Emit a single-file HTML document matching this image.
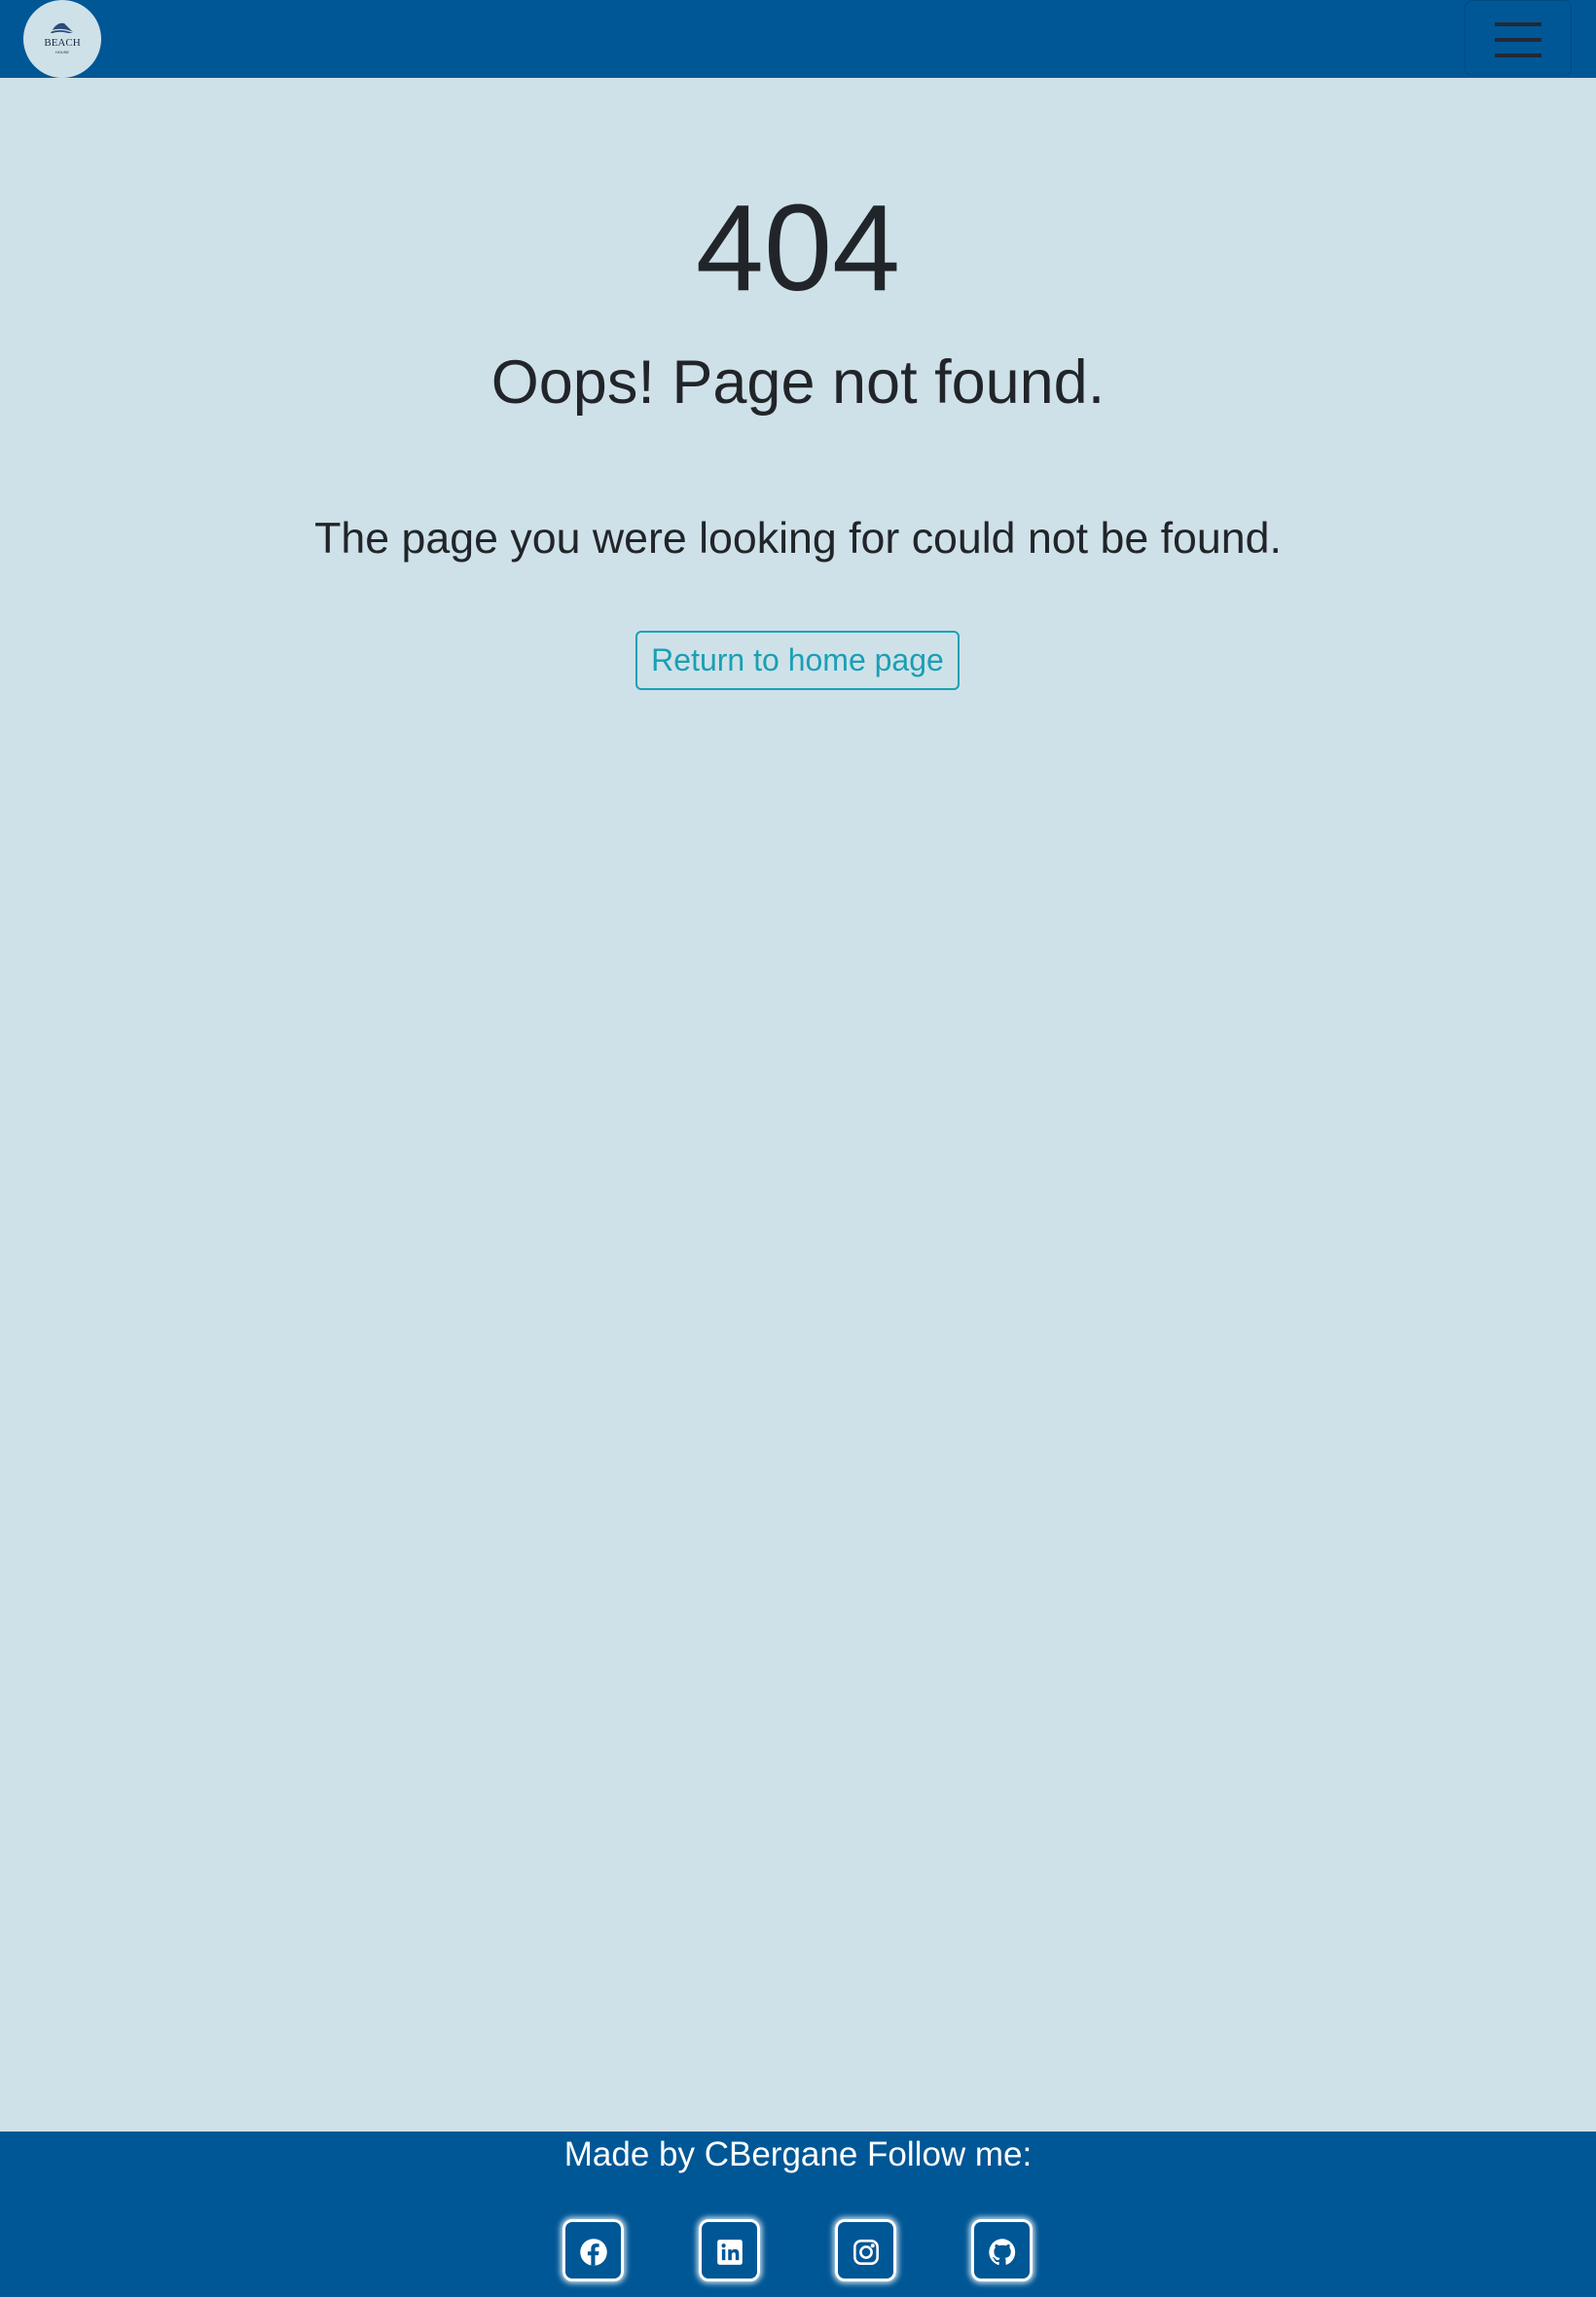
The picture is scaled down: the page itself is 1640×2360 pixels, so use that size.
<!DOCTYPE html>
<html><head><meta charset="utf-8"><style>
*{margin:0;padding:0;box-sizing:border-box}
html,body{width:1640px;height:2360px;overflow:hidden}
body{background:#cfe1e8;font-family:"Liberation Sans",sans-serif;color:#212529;position:relative}
nav{position:absolute;left:0;top:0;width:1640px;height:80px;background:#005796}
.logo{position:absolute;left:24px;top:0;width:80px;height:80px;border-radius:50%;background:#cfe1e8;text-align:center}
.logo .t{position:absolute;top:38px;left:0;width:80px;font-family:"Liberation Serif",serif;font-size:11px;color:#1d2a44}
.logo .h{position:absolute;top:51px;left:0;width:80px;font-size:4px;color:#1d2a44}
.burger{position:absolute;left:1505px;top:0;width:110px;height:78px;border:1.5px solid rgba(0,0,0,.15);border-radius:8px}
.burger i{position:absolute;left:30px;width:48px;height:4px;background:#212a37}
h1{position:absolute;top:180px;left:0;width:1640px;text-align:center;font-size:126px;font-weight:normal;line-height:150px}
h2{position:absolute;top:355px;left:0;width:1640px;text-align:center;font-size:63px;font-weight:normal;line-height:76px}
p.m{position:absolute;top:527px;left:0;width:1640px;text-align:center;font-size:44.7px;line-height:54px;white-space:nowrap}
.btn{position:absolute;left:653px;top:648px;width:333px;height:61px;border:2px solid #17a2b8;border-radius:6px;color:#1a9fb5;font-size:32px;line-height:57px;text-align:center;white-space:nowrap}
footer{position:absolute;left:0;top:2190px;width:1640px;height:170px;background:#005796;color:#fff}
footer .tx{position:absolute;top:2px;width:1640px;text-align:center;font-size:35px;line-height:44px}
.ic{position:absolute;top:90px;width:63px;height:64px;border:3px solid #fff;border-radius:10px;box-shadow:0 0 6px 2px rgba(255,255,255,.8);display:flex;align-items:center;justify-content:center;padding-top:4px}
</style></head><body>
<nav>
<div class="logo">
<svg style="position:absolute;left:26px;top:20px" width="28" height="18" viewBox="0 0 28 18"><path d="M2 14 Q8 2 16 4 L26 14 Z" fill="#2c4a7a"/><path d="M2 12 Q14 8 26 14 M3 15 Q14 11 25 17" stroke="#cfe1e8" stroke-width="1.2" fill="none"/></svg>
<div class="t">BEACH</div><div class="h">HOUSE</div></div>
<div class="burger"><i style="top:22px"></i><i style="top:38px"></i><i style="top:54px"></i></div>
</nav>
<h1>404</h1>
<h2>Oops! Page not found.</h2>
<p class="m">The page you were looking for could not be found.</p>
<div class="btn">Return to home page</div>
<footer>
<div class="tx">Made by CBergane Follow me:</div>
<div class="ic" style="left:578px"><svg width="30" height="30" viewBox="0 0 24 24"><circle cx="12" cy="12" r="11" fill="#fff"/><path d="M13.2 23V14.5h2.8l.4-3.2h-3.2V9.4c0-.9.3-1.6 1.6-1.6h1.7V5c-.3 0-1.3-.1-2.5-.1-2.5 0-4.1 1.5-4.1 4.2v2.3H7.1v3.2h2.8V23z" fill="#005796"/></svg></div>
<div class="ic" style="left:718px"><svg width="28" height="28" viewBox="0 0 24 24"><rect x="1" y="1" width="22" height="22" rx="2" fill="#fff"/><rect x="5" y="9.5" width="3" height="9.5" fill="#005796"/><circle cx="6.5" cy="6.2" r="1.8" fill="#005796"/><path d="M10.5 9.5h2.9v1.4c.5-.9 1.6-1.6 3.1-1.6 3 0 3.5 2 3.5 4.5V19h-3v-4.5c0-1.1 0-2.4-1.5-2.4s-1.9 1.1-1.9 2.3V19h-3.1z" fill="#005796"/></svg></div>
<div class="ic" style="left:858px"><svg width="28" height="28" viewBox="0 0 24 24" fill="none" stroke="#fff" stroke-width="2.2"><rect x="2" y="2" width="20" height="20" rx="5.5"/><circle cx="12" cy="12" r="4.8"/><circle cx="17.8" cy="6.2" r=".6" fill="#fff"/></svg></div>
<div class="ic" style="left:998px"><svg width="30" height="30" viewBox="0 0 24 24"><path fill="#fff" d="M12 1a11 11 0 0 0-3.5 21.4c.6.1.8-.2.8-.5v-2c-3.1.7-3.7-1.4-3.7-1.4-.5-1.3-1.2-1.6-1.2-1.6-1-.7.1-.7.1-.7 1.1.1 1.7 1.1 1.7 1.1 1 1.7 2.6 1.2 3.2.9.1-.7.4-1.2.7-1.5-2.4-.3-5-1.2-5-5.4 0-1.2.4-2.2 1.1-2.9-.1-.3-.5-1.4.1-2.9 0 0 .9-.3 3 1.1a10.5 10.5 0 0 1 5.5 0c2.1-1.4 3-1.1 3-1.1.6 1.5.2 2.6.1 2.9.7.8 1.1 1.7 1.1 2.9 0 4.2-2.6 5.1-5 5.4.4.3.8 1 .8 2v3c0 .3.2.6.8.5A11 11 0 0 0 12 1z"/></svg></div>
</footer>
</body></html>
